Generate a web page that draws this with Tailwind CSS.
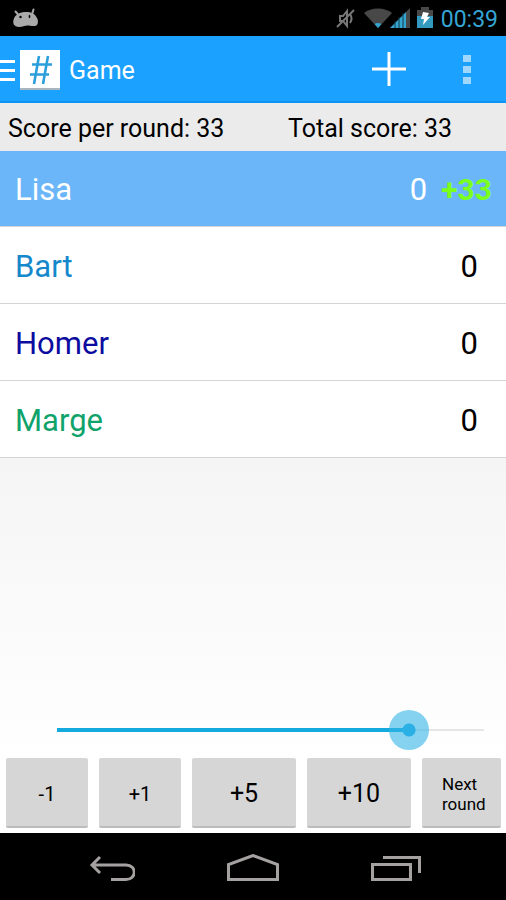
<!DOCTYPE html>
<html lang="en">
<head>
    <meta charset="UTF-8">
    <meta name="viewport" content="width=device-width, initial-scale=1.0">
    <title>Game</title>
    <script src="https://cdn.jsdelivr.net/npm/@tailwindcss/browser@4"></script>
</head>
<body class="min-h-screen flex flex-col bg-white text-black font-['Roboto',sans-serif]">

    <!-- Status bar -->
    <div class="flex items-center h-9 bg-black pl-3 pr-2">
        <svg class="w-7 h-7" viewBox="0 0 28 28" fill="#a9a9a9">
            <path d="M6 10C10 7.500 17 7.500 21 9.500C25 12 27 17 25.500 20C24.500 22.500 21 22.500 17 21.500C13 21 11 23 7 23C2 23 .5 19 1.500 16C2 13 4 11 6 10Z"/>
            <path d="M6.500 11L3.500 7.500M20 10.500L21.500 5.500" fill="none" stroke="#a9a9a9" stroke-width="2" stroke-linecap="round"/>
            <circle cx="8.500" cy="13" r="1.200" fill="#000"/>
            <ellipse cx="17.500" cy="12.500" rx=".8" ry="1.800" fill="#000"/>
        </svg>
        <div class="flex items-center ml-auto">
            <svg class="w-5 h-6 mr-2" viewBox="0 0 20 24" fill="none" stroke="#777" stroke-width="2">
                <path d="M4 10H7L11 5V20L7 15H4ZM14 8C16 11 16 14 14 17"/>
                <path d="M1 21L18 4"/>
            </svg>
            <svg class="w-7 h-6 -mr-0.5" viewBox="0 0 28 24">
                <path d="M0 7C7 1 21 1 28 7L14 22Z" fill="#484848"/>
                <path d="M10.500 18Q14 15.800 17.500 18L14 22Z" fill="#35a5cf"/>
            </svg>
            <svg class="w-5 h-6 mr-[7px]" viewBox="0 0 20 24">
                <path d="M0 22L16 6V22Z" fill="#35a5cf"/>
                <path d="M16 6L20 2V22H16Z" fill="#484848"/>
                <path d="M5 15V22M9 11V22M13 7V22" stroke="#0c3a4c"/>
            </svg>
            <svg class="w-4 h-6 mr-2" viewBox="0 0 16 24">
                <path d="M0 4H4V1H12V4H16V12H0Z" fill="#484848"/>
                <path d="M0 10H16V22H0Z" fill="#3399bf"/>
                <path d="M6 6L12 7L10 11H13L6 19L7 13H4Z" fill="#fff"/>
            </svg>
            <span class="pt-1 text-[23px] leading-7 text-[#35a5d3]">00:39</span>
        </div>
    </div>

    <!-- Action bar -->
    <header class="flex items-center h-[67px] bg-[#1ba1ff] border-b-2 border-[#0a94f5] text-white">
        <button type="button" aria-label="Open menu" class="flex items-center gap-[5px] pt-0.5">
            <svg class="w-[15px] h-6" viewBox="0 0 15 24" fill="#fff">
                <path d="M0 2H15V5H0ZM0 11H15V14H0ZM0 20H15V23H0Z"/>
            </svg>
            <svg class="w-10 h-10" viewBox="0 0 40 40">
                <rect width="40" height="40" fill="#a8b6c0"/>
                <rect width="40" height="38" fill="#fff"/>
                <path d="M19 6L14 34M28 6L23 34M12 14.500H32M10 24.500H29" fill="none" stroke="#2b9fdc" stroke-width="2.600"/>
            </svg>
        </button>
        <h1 class="ml-[9px] pt-1 text-[25px] leading-8">Game</h1>
        <button type="button" aria-label="Add player" class="ml-auto">
            <svg class="w-9 h-9" viewBox="0 0 36 36" fill="none" stroke="#fff" stroke-width="3">
                <path d="M1 18H35M18 1V35"/>
            </svg>
        </button>
        <button type="button" aria-label="More options" class="ml-14 mr-[35px]">
            <svg class="w-2 h-8" viewBox="0 0 8 32" fill="#a0d7ff">
                <path d="M0 2H8V9H0ZM0 13H8V20H0ZM0 24H8V31H0Z"/>
            </svg>
        </button>
    </header>

    <!-- Score summary -->
    <div class="grid grid-cols-[4fr_3fr] items-center h-12 bg-[#ebebeb] px-2 pt-1 text-[25px] leading-8">
        <p>Score per round: 33</p>
        <p>Total score: 33</p>
    </div>

    <main class="grow flex flex-col bg-linear-to-b from-[#ebebeb] to-white to-90%">

        <!-- Players -->
        <ul class="bg-white text-[31px] leading-9">
            <li class="flex items-center h-[76px] border-b border-[#d5d5d5] bg-[#6bb6f8] pt-0.5 pl-[15px] pr-3.5 text-white">
                <span class="grow">Lisa</span>
                <span>0</span>
                <span class="ml-3.5 text-[30px] font-bold text-[#7bff1c]">+33</span>
            </li>
            <li class="flex items-center h-[77px] border-b border-[#d5d5d5] pt-1 pl-[15px] pr-7">
                <span class="grow text-[#1588cc]">Bart</span>
                <span>0</span>
            </li>
            <li class="flex items-center h-[77px] border-b border-[#d5d5d5] pt-1 pl-[15px] pr-7">
                <span class="grow text-[#0c0ca0]">Homer</span>
                <span>0</span>
            </li>
            <li class="flex items-center h-[77px] border-b border-[#d5d5d5] pt-1 pl-[15px] pr-7">
                <span class="grow text-[#0fa36b]">Marge</span>
                <span>0</span>
            </li>
        </ul>

        <!-- Slider -->
        <div class="relative mt-auto mb-2 ml-[37px] mr-0.5 h-10">
            <div class="absolute inset-x-5 top-[19px] h-0.5 bg-[#e6e6e6]"></div>
            <div class="absolute inset-x-5 top-[18px]">
                <div class="h-1 bg-[#14aadd]" style="width: 82.5%"></div>
            </div>
            <input type="range" min="0" max="40" value="33" aria-label="Score" class="relative block w-full h-10 appearance-none bg-transparent [&::-webkit-slider-thumb]:appearance-none [&::-webkit-slider-thumb]:size-10 [&::-webkit-slider-thumb]:rounded-full [&::-webkit-slider-thumb]:bg-[radial-gradient(circle,#2bb0e6_6px,#33b5e599_7px)]">
        </div>

        <!-- Score buttons -->
        <div class="grid grid-cols-[82fr_82fr_104fr_104fr_79fr] gap-[11px] pl-1.5 pr-[5px] pb-[5px]">
            <button type="button" class="h-[70px] pt-1 rounded-xs bg-[#d6d6d6] border-b-2 border-[#bcbcbc] text-xl">-1</button>
            <button type="button" class="h-[70px] pt-1 rounded-xs bg-[#d6d6d6] border-b-2 border-[#bcbcbc] text-xl">+1</button>
            <button type="button" class="h-[70px] pt-1 rounded-xs bg-[#d6d6d6] border-b-2 border-[#bcbcbc] text-[25px]">+5</button>
            <button type="button" class="h-[70px] pt-1 rounded-xs bg-[#d6d6d6] border-b-2 border-[#bcbcbc] text-[25px]">+10</button>
            <button type="button" class="h-[70px] pt-1 rounded-xs bg-[#d6d6d6] border-b-2 border-[#bcbcbc] pl-5 text-left text-[17px] leading-5">Next<br>round</button>
        </div>
    </main>

    <!-- Navigation bar -->
    <nav class="flex justify-center items-center gap-[92px] h-[67px] bg-black pt-1.5">
        <button type="button" aria-label="Back">
            <svg class="w-13 h-8" viewBox="0 0 52 32" fill="none" stroke="#a5a1a1" stroke-width="3">
                <path d="M18 3L10 11L18 19M10 11H44C55 11 55 25.500 44 25.500H29" transform="translate(-1)"/>
            </svg>
        </button>
        <button type="button" aria-label="Home">
            <svg class="w-13 h-8" viewBox="0 0 52 32" fill="none" stroke="#a5a1a1" stroke-width="3">
                <path d="M1.500 25.500V10.500L26 1.500L50.500 10.500V25.500Z"/>
            </svg>
        </button>
        <button type="button" aria-label="Recent apps">
            <svg class="w-13 h-8" viewBox="0 0 52 32" fill="none" stroke="#a5a1a1" stroke-width="3">
                <path d="M1.500 10.500H39.500V25.500H1.500ZM12 3.500H48.500V19"/>
            </svg>
        </button>
    </nav>

</body>
</html>
